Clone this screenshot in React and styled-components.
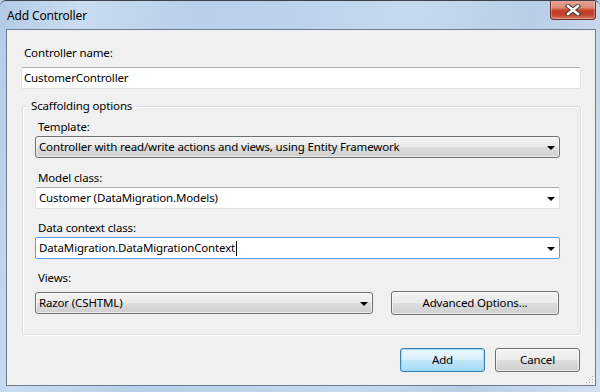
import React from 'react'
import styled, { createGlobalStyle } from 'styled-components'

const GlobalStyle = createGlobalStyle`
  html, body {
    margin: 0;
    padding: 0;
    background: #bcd3ea;
  }
  * {
    box-sizing: border-box;
  }
`

const Window = styled.div`
  width: 600px;
  height: 392px;
  display: flex;
  flex-direction: column;
  font-family: 'Noto Sans', 'Open Sans', sans-serif;
  font-size: 11.5px;
  letter-spacing: -0.15px;
  color: #000;
  border-top: 1px solid #3b4350;
  border-radius: 6px 6px 0 0;
  overflow: hidden;
  background: linear-gradient(
    100deg,
    #b3cbe6 0%,
    #c9dcf0 12%,
    #b7cfe9 30%,
    #bcd3ec 45%,
    #c6daef 62%,
    #b8cee6 80%,
    #d2e1f1 100%
  );
`

const TitleBar = styled.div`
  height: 28px;
  display: flex;
  align-items: flex-start;
  justify-content: space-between;
  padding: 0 4px 0 7px;
`

const Title = styled.div`
  padding-top: 7px;
  line-height: 16px;
  font-size: 12px;
`

const CloseButton = styled.div`
  width: 46px;
  height: 20px;
  margin-top: -1px;
  display: flex;
  align-items: center;
  justify-content: center;
  border: 1px solid #6b2d22;
  border-top: none;
  border-radius: 0 0 4px 4px;
  background: linear-gradient(
    180deg,
    #e9a899 0%,
    #dd8a76 40%,
    #c5432a 55%,
    #c23f27 75%,
    #d67660 100%
  );
  box-shadow: inset 0 0 0 1px rgba(255, 255, 255, 0.3);
`

const Client = styled.div`
  flex: 1;
  margin: 0 4px 6px 6px;
  border: 1px solid #6e7e90;
  background: #f0f0f0;
  padding: 15px 14px 12px 14px;
  display: flex;
  flex-direction: column;
  position: relative;
`

const Label = styled.div`
  line-height: 16px;
  height: 16px;
  padding-left: 3px;
  margin-bottom: ${p => p.$gap || 1}px;
`

const TextBox = styled.div`
  height: 22px;
  background: #fff;
  border: 1px solid #e2e3ea;
  border-top-color: #abadb3;
  border-radius: 2px;
  display: flex;
  align-items: center;
  padding-left: 2px;
  line-height: 16px;
`

const Group = styled.div`
  margin-top: 17px;
  margin-left: 1px;
  border: 1px solid #d5dfe5;
  box-shadow: inset 1px 1px 0 #fff, 1px 1px 0 #fff;
  border-radius: 3px;
  padding: 12px 20px 19px 12px;
  position: relative;
  display: flex;
  flex-direction: column;
`

const Legend = styled.span`
  position: absolute;
  top: -9px;
  left: 6px;
  padding: 0 2px;
  background: #f0f0f0;
  line-height: 16px;
`

const Field = styled.div`
  display: flex;
  flex-direction: column;
  margin-top: ${p => p.$top || 0}px;
`

const Combo = styled.div`
  height: 22px;
  display: flex;
  align-items: center;
  justify-content: space-between;
  padding: 0 4px 0 3px;
  line-height: 16px;
  border-radius: ${p => (p.$kind === 'list' ? 3 : 2)}px;
  border: 1px solid
    ${p => (p.$kind === 'list' ? '#707070' : p.$focused ? '#569de5' : '#e2e3ea')};
  ${p => p.$kind !== 'list' && !p.$focused && 'border-top-color: #abadb3;'}
  background: ${p =>
    p.$kind === 'list'
      ? 'linear-gradient(180deg, #f2f2f2 0%, #ebebeb 48%, #dddddd 52%, #cfcfcf 100%)'
      : '#fff'};
  width: ${p => (p.$width ? `${p.$width}px` : 'auto')};
  box-shadow: ${p => (p.$kind === 'list' ? 'inset 0 0 0 1px rgba(255,255,255,0.6)' : 'none')};
`

const Caret = styled.span`
  display: inline-block;
  width: 1px;
  height: 15px;
  background: #000;
  margin-left: 1px;
  vertical-align: middle;
`

const Arrow = styled.span`
  width: 0;
  height: 0;
  border-left: 4px solid transparent;
  border-right: 4px solid transparent;
  border-top: 4px solid #000;
  margin-top: 1px;
`

const Row = styled.div`
  display: flex;
  align-items: center;
  height: 24px;
  gap: 18px;
`

const Button = styled.div`
  height: 24px;
  width: ${p => p.$width}px;
  display: flex;
  align-items: center;
  justify-content: center;
  line-height: 16px;
  border-radius: 3px;
  border: 1px solid ${p => (p.$primary ? '#3c7fb1' : '#707070')};
  background: ${p =>
    p.$primary
      ? 'linear-gradient(180deg, #eaf6fd 0%, #d9f0fc 48%, #bee6fd 52%, #a7d9f5 100%)'
      : 'linear-gradient(180deg, #f2f2f2 0%, #ebebeb 48%, #dddddd 52%, #cfcfcf 100%)'};
  box-shadow: inset 0 0 0 1px ${p => (p.$primary ? 'rgba(140, 220, 255, 0.9)' : 'rgba(255,255,255,0.6)')};
`

const Buttons = styled.div`
  margin-top: 13px;
  display: flex;
  justify-content: flex-end;
  gap: 10px;
  padding-right: 1px;
`

const Grip = styled.svg`
  position: absolute;
  right: 1px;
  bottom: 1px;
`

const gripDots = [
  [8, 2],
  [5, 5],
  [8, 5],
  [2, 8],
  [5, 8],
  [8, 8],
]

export default function App() {
  return (
    <>
      <GlobalStyle />
      <Window>
        <TitleBar>
          <Title>Add Controller</Title>
          <CloseButton>
            <svg width="16" height="12" viewBox="0 0 16 12">
              <path
                d="M3 2 L13 10 M13 2 L3 10"
                stroke="#3d3d3d"
                strokeWidth="4.4"
                strokeLinecap="square"
              />
              <path
                d="M3 2 L13 10 M13 2 L3 10"
                stroke="#fff"
                strokeWidth="2.4"
                strokeLinecap="square"
              />
            </svg>
          </CloseButton>
        </TitleBar>
        <Client>
          <Label $gap={6}>Controller name:</Label>
          <TextBox>CustomerController</TextBox>
          <Group>
            <Legend>Scaffolding options</Legend>
            <Field>
              <Label>Template:</Label>
              <Combo $kind="list">
                <span>Controller with read/write actions and views, using Entity Framework</span>
                <Arrow />
              </Combo>
            </Field>
            <Field $top={12}>
              <Label>Model class:</Label>
              <Combo>
                <span>Customer (DataMigration.Models)</span>
                <Arrow />
              </Combo>
            </Field>
            <Field $top={11}>
              <Label>Data context class:</Label>
              <Combo $focused>
                <span>
                  DataMigration.DataMigrationContext
                  <Caret />
                </span>
                <Arrow />
              </Combo>
            </Field>
            <Field $top={11}>
              <Label $gap={5}>Views:</Label>
              <Row>
                <Combo $kind="list" $width={338}>
                  <span>Razor (CSHTML)</span>
                  <Arrow />
                </Combo>
                <Button $width={168}>Advanced Options...</Button>
              </Row>
            </Field>
          </Group>
          <Buttons>
            <Button $primary $width={85}>Add</Button>
            <Button $width={85}>Cancel</Button>
          </Buttons>
          <Grip width="10" height="10" viewBox="0 0 10 10">
            {gripDots.map(([x, y]) => (
              <rect key={`${x}-${y}`} x={x} y={y} width="1" height="1" fill="#b0b0b0" />
            ))}
          </Grip>
        </Client>
      </Window>
    </>
  )
}
